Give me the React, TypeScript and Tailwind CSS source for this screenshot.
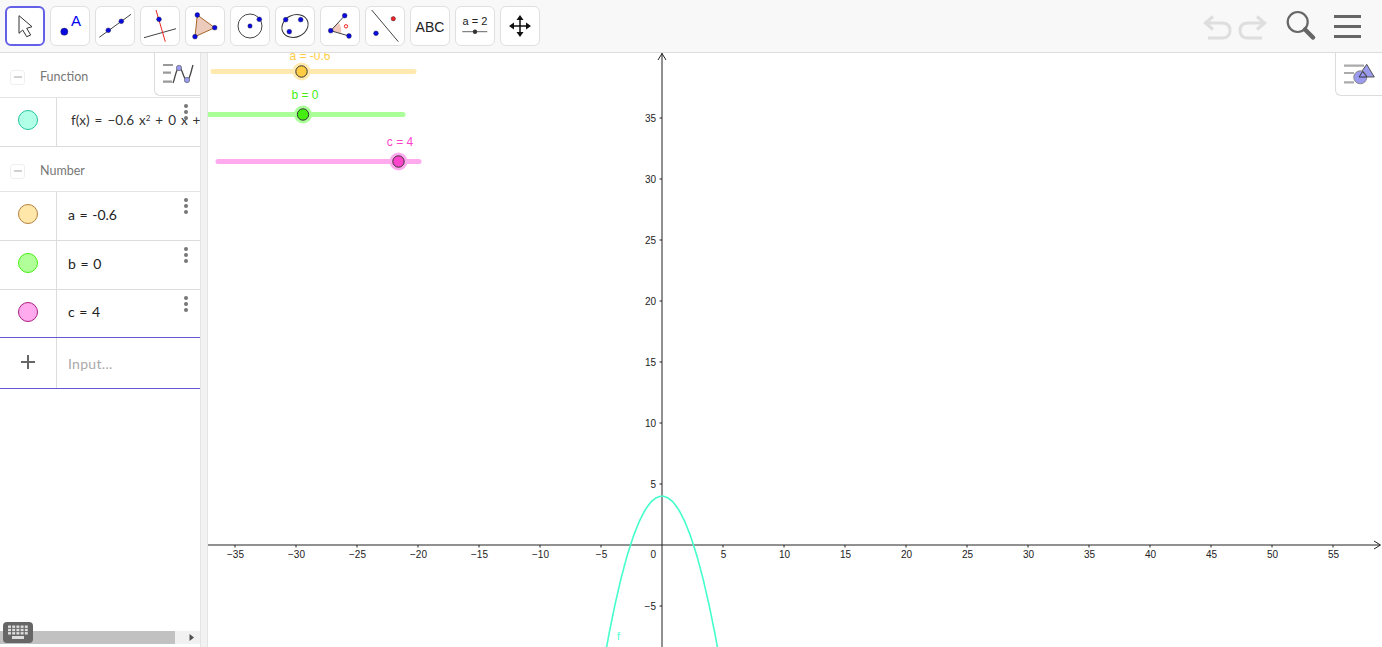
import React from 'react';

const ox = 662;
const oy = 545;
const unit = 12.2;
const sans = '"Liberation Sans", Arial, sans-serif';

const xTicks = [-35, -30, -25, -20, -15, -10, -5, 5, 10, 15, 20, 25, 30, 35, 40, 45, 50, 55];
const yTicks = [-5, 5, 10, 15, 20, 25, 30, 35];

function Pt({ x, y, r = 3, fill = '#0a0ae0' }: { x: number; y: number; r?: number; fill?: string }) {
  return <circle cx={x} cy={y} r={r} fill={fill} stroke="#223" strokeWidth={0.4} />;
}

const tools: React.ReactNode[] = [
  <path d="M14 9.7V27.3L17.7 24L21.7 30.7L25.7 29L21.7 22.3L27 20.7Z" fill="#fff" stroke="#333" strokeWidth={1} strokeLinejoin="round" />,
  <>
    <Pt x={14.3} y={25.7} r={3.6} />
    <text x={26} y={20} textAnchor="middle" fontSize={15} fill="#0000ee" fontFamily={sans}>A</text>
  </>,
  <>
    <line x1={4.3} y1={31.3} x2={36} y2={8.3} stroke="#444" />
    <Pt x={13.3} y={24.3} r={2.4} />
    <Pt x={26.3} y={15.3} r={2.4} />
  </>,
  <>
    <line x1={4} y1={31.7} x2={36} y2={22.7} stroke="#444" />
    <line x1={16} y1={4} x2={25.3} y2={35.7} stroke="#ee2222" />
    <Pt x={19} y={13.3} r={2.4} />
  </>,
  <>
    <path d="M12.3 9L29.7 21.7L10 30.7Z" fill="#eccabc" stroke="#a5662a" />
    <Pt x={12.3} y={9} r={2.4} />
    <Pt x={29.7} y={21.7} r={2.4} />
    <Pt x={10} y={30.7} r={2.4} />
  </>,
  <>
    <circle cx={20} cy={20} r={12} fill="none" stroke="#444" />
    <Pt x={20} y={20} r={2.2} />
    <Pt x={29.3} y={13.3} r={2.4} />
  </>,
  <>
    <ellipse cx={20} cy={20} rx={13.5} ry={11} transform="rotate(-25 20 20)" fill="none" stroke="#333" />
    <Pt x={10.7} y={13.7} r={2.4} />
    <Pt x={25.7} y={13.7} r={2.4} />
    <Pt x={14.3} y={25.7} r={2.4} />
  </>,
  <>
    <path d="M10.7 24.7L18.5 16.5Q22 21 21 27.5Z" fill="#f2c9bd" />
    <path d="M24.7 9.7L10.7 24.7L29 30" fill="none" stroke="#444" />
    <circle cx={26} cy={20.3} r={1.7} fill="none" stroke="#ee2222" />
    <Pt x={10.7} y={24.7} r={2.4} />
    <Pt x={24.7} y={9.7} r={2.4} />
    <Pt x={29} y={30} r={2.4} />
  </>,
  <>
    <line x1={6.7} y1={4} x2={33.3} y2={35.7} stroke="#444" />
    <Pt x={28.3} y={12.7} r={2.2} fill="#ee2222" />
    <Pt x={11} y={27.3} r={2.4} />
  </>,
  <text x={20} y={25.5} textAnchor="middle" fontSize={14} fill="#222" fontFamily={sans}>ABC</text>,
  <>
    <text x={20} y={19} textAnchor="middle" fontSize={11} fill="#222" fontFamily={sans}>a = 2</text>
    <line x1={7.3} y1={25.7} x2={32.3} y2={25.7} stroke="#666" />
    <circle cx={20} cy={25.7} r={2.2} fill="#333" />
  </>,
  <>
    <path d="M20 12V28M12 20H28" stroke="#111" strokeWidth={1.5} />
    <path d="M20 9L16.5 14H23.5ZM20 31L16.5 26H23.5ZM9 20L14 16.5V23.5ZM31 20L26 16.5V23.5Z" fill="#111" />
  </>,
];

function ToolButton({ active, children }: { active?: boolean; children: React.ReactNode }) {
  return (
    <div
      className={
        active
          ? 'h-[40px] w-[40px] rounded-[6px] border-2 border-[#6560e8] bg-white'
          : 'h-[40px] w-[40px] rounded-[6px] border border-[#e0e0e0] bg-white'
      }
    >
      <svg width={40} height={40} viewBox="0 0 40 40" className={active ? 'ml-[-2px] mt-[-2px]' : 'ml-[-1px] mt-[-1px]'}>
        {children}
      </svg>
    </div>
  );
}

function Toolbar() {
  return (
    <div className="flex h-[53px] shrink-0 items-center justify-between border-b border-[#dcdcdc] bg-[#f8f8f8] pl-[5px] pr-[21px]">
      <div className="flex gap-[5px]">
        {tools.map((t, i) => (
          <ToolButton key={i} active={i === 0}>{t}</ToolButton>
        ))}
      </div>
      <div className="flex items-center">
        <svg width={64} height={30} viewBox="0 0 64 30" className="mr-[18px]" fill="none" stroke="#dedede" strokeWidth={3}>
          <path d="M3 12H19Q27 12 27 19.5T19 27H5" />
          <path d="M10 5.5L2.5 12L10 18.5" strokeWidth={3.2} />
          <path d="M61 12H45Q37 12 37 19.5T45 27H59" />
          <path d="M54 5.5L61.5 12L54 18.5" strokeWidth={3.2} />
        </svg>
        <svg width={32} height={32} viewBox="0 0 32 32" fill="none" stroke="#666" className="mr-[17px]">
          <circle cx={12.7} cy={12} r={10} strokeWidth={2.2} />
          <path d="M20 19.5L28 27.5" strokeWidth={4.5} strokeLinecap="round" />
        </svg>
        <div className="flex w-[27px] flex-col gap-[7px]">
          <div className="h-[3px] bg-[#666]" />
          <div className="h-[3px] bg-[#666]" />
          <div className="h-[3px] bg-[#666]" />
        </div>
      </div>
    </div>
  );
}

function Dots() {
  return (
    <div className="absolute right-[12px] top-[6px] flex flex-col gap-[2px]">
      <div className="h-[4px] w-[4px] rounded-full bg-[#777]" />
      <div className="h-[4px] w-[4px] rounded-full bg-[#777]" />
      <div className="h-[4px] w-[4px] rounded-full bg-[#777]" />
    </div>
  );
}

function GroupHeader({ label }: { label: string }) {
  return (
    <div className="flex h-[45px] items-center border-b border-[#e4e4e4] pl-[10px] pt-[4px]">
      <div className="flex h-[15px] w-[15px] items-center justify-center rounded-[3px] border border-[#efefef]">
        <div className="h-[2px] w-[8px] bg-[#d0d0d0]" />
      </div>
      <span className="ml-[15px] text-[12.5px] text-[#777]">{label}</span>
    </div>
  );
}

function Row({ fill, border, last, children }: { fill: string; border: string; last?: boolean; children: React.ReactNode }) {
  return (
    <div className={last ? 'relative flex h-[47px]' : 'relative flex h-[49px] border-b border-[#dcdcdc]'}>
      <div className="flex w-[57px] shrink-0 justify-center border-r border-[#dcdcdc] pt-[12px]">
        <div className="h-[20px] w-[20px] rounded-full border" style={{ backgroundColor: fill, borderColor: border }} />
      </div>
      <div className="flex min-w-0 flex-1 items-center overflow-hidden whitespace-nowrap pb-[4px] pl-[11px] text-[14px] text-[#222] [word-spacing:1px]">
        {children}
      </div>
      <Dots />
    </div>
  );
}

function AlgebraPanel() {
  return (
    <div className="relative flex w-[200px] shrink-0 flex-col bg-white">
      <GroupHeader label="Function" />
      <Row fill="#b2ffe8" border="#22c49a">
        <span className="ml-[3px] text-[13.5px] text-[#333] [word-spacing:1.5px]">
          f(x) = −0.6 x<sup className="text-[8px]">2</sup> + 0 x + 4
        </span>
      </Row>
      <GroupHeader label="Number" />
      <Row fill="#ffe7aa" border="#b5803d"><span>a = -0.6</span></Row>
      <Row fill="#b0ff99" border="#44ee11"><span>b = 0</span></Row>
      <Row fill="#ffaaee" border="#aa1f80" last><span>c = 4</span></Row>
      <div className="flex h-[52px] border-y border-[#6557d2]">
        <div className="flex w-[57px] shrink-0 items-center justify-center border-r border-[#dcdcdc] pb-[2px]">
          <svg width={16} height={16} viewBox="0 0 16 16" stroke="#666" strokeWidth={2}>
            <path d="M8 1V15M1 8H15" />
          </svg>
        </div>
        <div className="flex flex-1 items-center pl-[11px] text-[14px] tracking-[0.3px] text-[#aaa]">Input...</div>
      </div>
      <div className="flex-1" />
      <div className="mb-[3px] flex h-[13px] items-center bg-[#f1f1f1]">
        <div className="h-full w-[175px] bg-[#c1c1c1]" />
        <svg width={25} height={13} viewBox="0 0 25 13" className="shrink-0">
          <path d="M14.5 3L19 6.5L14.5 10Z" fill="#505050" />
        </svg>
      </div>
      {/* style bar toggle sits over the panel */}
      <div className="absolute right-0 top-0 h-[43px] w-[46px] rounded-bl-[6px] border-b border-l border-[#dcdcdc] bg-white">
        <svg width={46} height={43} viewBox="0 0 46 43">
          <path d="M8 12H18M8 19.7H16M8 28.7H17" stroke="#999" strokeWidth={2.2} />
          <path d="M18 30C20 26 21 15 24 15C28 15 28 27 32 27C35 27 36 18 38 12" fill="none" stroke="#444" strokeWidth={1.3} />
          <circle cx={24} cy={15} r={2.7} fill="#9a9aee" stroke="#555" strokeWidth={0.6} />
          <circle cx={32} cy={27} r={2.7} fill="#9a9aee" stroke="#555" strokeWidth={0.6} />
        </svg>
      </div>
      {/* on-screen keyboard button */}
      <div className="absolute bottom-[4px] left-[3px] flex h-[21px] w-[30px] items-center justify-center rounded-[4px] bg-[#666]">
        <svg width={24} height={15} viewBox="0 0 24 15" fill="#ddd">
          {[0, 1, 2].map((r) =>
            [0, 1, 2, 3, 4].map((c) => (
              <rect key={`${r}-${c}`} x={2 + c * 4.2} y={0.5 + r * 3.3} width={3} height={2.4} />
            ))
          )}
          <rect x={6} y={11} width={12} height={3} />
        </svg>
      </div>
    </div>
  );
}

function Slider({
  x1, x2, y, hx, label, lx, ly, track, dot,
}: {
  x1: number; x2: number; y: number; hx: number; label: string; lx: number; ly: number; track: string; dot: string;
}) {
  return (
    <g>
      <line x1={x1} y1={y} x2={x2} y2={y} stroke={track} strokeWidth={5} strokeLinecap="round" />
      <circle cx={hx} cy={y} r={9} fill={track} />
      <circle cx={hx} cy={y} r={5.7} fill={dot} stroke="#333" strokeWidth={1} />
      <text x={lx} y={ly} textAnchor="middle" fontSize={12} fill={dot} fontFamily={sans}>{label}</text>
    </g>
  );
}

function GraphView() {
  const pts: string[] = [];
  for (let x = -5; x <= 5.001; x += 0.1) {
    const y = -0.6 * x * x + 4;
    pts.push(`${(ox + x * unit).toFixed(1)},${(oy - y * unit).toFixed(1)}`);
  }
  return (
    <div className="relative min-w-0 flex-1 overflow-hidden bg-white">
      <svg width={1174} height={594} viewBox="208 53 1174 594" className="block" fontFamily={sans}>
        <Slider x1={213} x2={414} y={71.5} hx={301.5} label="a = -0.6" lx={310} ly={60} track="#ffe9ae" dot="#ffcc44" />
        <Slider x1={204} x2={403} y={114.5} hx={303} label="b = 0" lx={305} ly={99} track="#aaff99" dot="#44ee11" />
        <Slider x1={218} x2={419} y={161.5} hx={398.5} label="c = 4" lx={400} ly={146} track="#ffaaee" dot="#ff44cc" />

        <line x1={208} y1={oy} x2={1380} y2={oy} stroke="#222" />
        <path d="M1374 541L1380.5 545L1374 549" fill="none" stroke="#222" />
        <line x1={ox} y1={53} x2={ox} y2={647} stroke="#222" />
        <path d="M658 60L662 53.5L666 60" fill="none" stroke="#222" />

        {xTicks.map((t) => (
          <g key={t}>
            <line x1={ox + t * unit} y1={oy} x2={ox + t * unit} y2={oy + 2.5} stroke="#222" />
            <text x={ox + t * unit + 0.5} y={oy + 13} textAnchor="middle" fontSize={10} fill="#222">
              {t < 0 ? `−${-t}` : t}
            </text>
          </g>
        ))}
        {yTicks.map((t) => (
          <g key={t}>
            <line x1={ox - 2.5} y1={oy - t * unit} x2={ox} y2={oy - t * unit} stroke="#222" />
            <text x={ox - 6} y={oy - t * unit + 3.5} textAnchor="end" fontSize={10} fill="#222">
              {t < 0 ? `−${-t}` : t}
            </text>
          </g>
        ))}
        <text x={656} y={558} textAnchor="end" fontSize={10} fill="#222">0</text>

        <polyline points={pts.join(' ')} fill="none" stroke="#44ffcc" strokeWidth={1.6} />
        <text x={617} y={640} fontSize={10.5} fill="#44ffcc">f</text>
      </svg>
      {/* style bar toggle over the graphics view */}
      <div className="absolute right-0 top-0 h-[43px] w-[47px] rounded-bl-[6px] border-b border-l border-[#dcdcdc] bg-white">
        <svg width={47} height={43} viewBox="0 0 47 43">
          <path d="M8 12.7H28M8 20H18M8 29.3H18" stroke="#aaa" strokeWidth={2.2} />
          <path d="M30.7 11.3L38.3 24H22Z" fill="#9a9aee" stroke="#555" strokeWidth={1} />
          <circle cx={24.3} cy={24.3} r={6.5} fill="#9a9aee" stroke="#888" strokeWidth={1} />
          <path d="M26.7 18.5L31 24H23Z" fill="none" stroke="#334" strokeWidth={1} />
        </svg>
      </div>
    </div>
  );
}

export default function App() {
  return (
    <div className="flex h-[647px] w-[1382px] flex-col overflow-hidden bg-white font-['Lato',sans-serif]">
      <Toolbar />
      <div className="flex min-h-0 flex-1">
        <AlgebraPanel />
        <div className="w-[8px] shrink-0 border-x border-[#e4e4e4] bg-[#f2f2f2]" />
        <GraphView />
      </div>
    </div>
  );
}
